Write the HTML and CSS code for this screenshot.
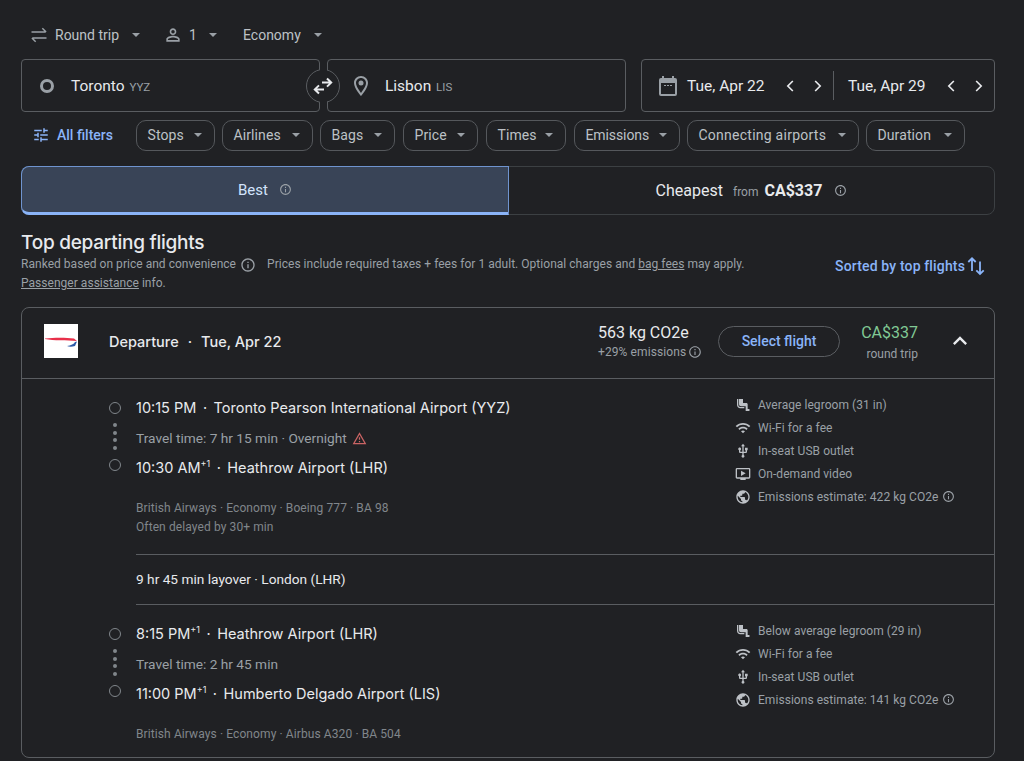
FILE: index.html
```html
<!DOCTYPE html>
<html lang="en">
<head>
<meta charset="utf-8">
<title>Flights</title>
<link rel="stylesheet" href="styles.css">
</head>
<body>
<svg class="defs" width="0" height="0" aria-hidden="true">
  <symbol id="caret" viewBox="0 0 10 5"><path d="M0 0l5 5 5-5z"/></symbol>
  <symbol id="info" viewBox="0 0 24 24"><path d="M11 7h2v2h-2zm0 4h2v6h-2zm1-9C6.48 2 2 6.48 2 12s4.48 10 10 10 10-4.48 10-10S17.52 2 12 2zm0 18c-4.41 0-8-3.59-8-8s3.59-8 8-8 8 3.59 8 8-3.59 8-8 8z"/></symbol>
  <symbol id="seat" viewBox="0 0 24 24"><path d="M5 12V3H3v9c0 2.76 2.24 5 5 5h6v-2H8c-1.66 0-3-1.34-3-3zm15.5 6H19v-7c0-1.1-.9-2-2-2h-5V3H6v8c0 1.65 1.35 3 3 3h7v7h4.5c.83 0 1.5-.67 1.5-1.5s-.67-1.5-1.5-1.5z"/></symbol>
  <symbol id="wifi" viewBox="0 0 24 24"><path d="M1 9l2 2c4.97-4.97 13.03-4.97 18 0l2-2C16.93 2.93 7.08 2.93 1 9zm8 8l3 3 3-3c-1.65-1.66-4.34-1.66-6 0zm-4-4l2 2c2.76-2.76 7.24-2.76 10 0l2-2C15.14 9.14 8.87 9.14 5 13z"/></symbol>
  <symbol id="usb" viewBox="0 0 24 24"><path d="M15 7v4h1v2h-3V5h2l-3-4-3 4h2v8H8v-2.07c.7-.37 1.2-1.08 1.2-1.93 0-1.21-.99-2.2-2.2-2.2-1.21 0-2.2.99-2.2 2.2 0 .85.5 1.56 1.2 1.93V13c0 1.11.89 2 2 2h3v3.05c-.71.37-1.2 1.1-1.2 1.95 0 1.22.99 2.2 2.2 2.2 1.21 0 2.2-.98 2.2-2.2 0-.85-.49-1.58-1.2-1.95V15h3c1.11 0 2-.89 2-2v-2h1V7h-4z"/></symbol>
  <symbol id="video" viewBox="0 0 24 24"><path d="M21 3H3c-1.11 0-2 .89-2 2v12c0 1.1.89 2 2 2h5v2h8v-2h5c1.1 0 2-.9 2-2V5c0-1.11-.9-2-2-2zm0 14H3V5h18v12zM16 11l-7 4V7z"/></symbol>
  <symbol id="globe" viewBox="0 0 24 24"><path d="M12 2C6.48 2 2 6.48 2 12s4.48 10 10 10 10-4.48 10-10S17.52 2 12 2zm-1 17.93c-3.95-.49-7-3.85-7-7.93 0-.62.08-1.21.21-1.79L9 15v1c0 1.1.9 2 2 2v1.93zm6.9-2.54c-.26-.81-1-1.39-1.9-1.39h-1v-3c0-.55-.45-1-1-1H8v-2h2c.55 0 1-.45 1-1V7h2c1.1 0 2-.9 2-2v-.41c2.93 1.19 5 4.06 5 7.41 0 2.08-.8 3.97-2.1 5.39z"/></symbol>
  <symbol id="left" viewBox="0 0 24 24"><path d="M15.4 6L9.4 12l6 6" fill="none" stroke="currentColor" stroke-width="2"/></symbol>
  <symbol id="right" viewBox="0 0 24 24"><path d="M8.6 6l6 6-6 6" fill="none" stroke="currentColor" stroke-width="2"/></symbol>
</svg>

<main class="page">
  <div class="trip-row">
    <div class="trip-item trip-type">
      <svg class="icon-20" viewBox="0 0 24 24"><path d="M3 8.5h17M16 4l4.500 4.500M21 15.500H4M8 20l-4.500-4.500" fill="none" stroke="currentColor" stroke-width="1.800"/></svg>
      <span>Round trip</span><svg class="caret"><use href="#caret"/></svg>
    </div>
    <div class="trip-item trip-pax">
      <svg class="icon-20" viewBox="0 0 24 24"><path d="M12 5.900a2.100 2.100 0 110 4.200 2.100 2.100 0 010-4.200m0 9c2.970 0 6.100 1.460 6.100 2.100v1.100H5.900V17c0-.64 3.130-2.100 6.100-2.100M12 4C9.790 4 8 5.790 8 8s1.790 4 4 4 4-1.790 4-4-1.790-4-4-4zm0 9c-2.670 0-8 1.340-8 4v3h16v-3c0-2.660-5.330-4-8-4z"/></svg>
      <span>1</span><svg class="caret"><use href="#caret"/></svg>
    </div>
    <div class="trip-item trip-class"><span>Economy</span><svg class="caret"><use href="#caret"/></svg></div>
  </div>

  <div class="search-row">
    <div class="place-group">
      <div class="place origin">
        <span class="origin-dot"></span>
        <span class="place-name">Toronto <small>YYZ</small></span>
      </div>
      <div class="place dest">
        <svg class="icon-24" viewBox="0 0 24 24"><path d="M12 2C8.130 2 5 5.130 5 9c0 5.250 7 13 7 13s7-7.750 7-13c0-3.870-3.130-7-7-7zM7 9c0-2.760 2.240-5 5-5s5 2.240 5 5c0 2.880-2.880 7.190-5 9.880C9.920 16.210 7 11.850 7 9z"/><circle cx="12" cy="9" r="2.500"/></svg>
        <span class="place-name">Lisbon <small>LIS</small></span>
      </div>
      <div class="swap">
        <svg viewBox="0 0 24 24"><path d="M11 8.600h9M16 4.500l4.200 4.100-4.200 4M13 15.400H4M8 11.400l-4.200 4 4.200 4.100" fill="none" stroke="#e8eaed" stroke-width="2"/></svg>
      </div>
    </div>
    <div class="dates">
      <svg class="icon-24 cal" viewBox="0 0 24 24"><path d="M19 4h-1V2h-2v2H8V2H6v2H5a2 2 0 00-2 2v14a2 2 0 002 2h14a2 2 0 002-2V6a2 2 0 00-2-2zm0 16H5V9h14v11zM8 11h2v1H8zm3 0h2v1h-2zm3 0h2v1h-2z"/></svg>
      <span class="date-text first">Tue, Apr 22</span>
      <svg class="chev"><use href="#left"/></svg>
      <svg class="chev ch-b"><use href="#right"/></svg>
      <span class="date-sep"></span>
      <span class="date-text second">Tue, Apr 29</span>
      <svg class="chev"><use href="#left"/></svg>
      <svg class="chev ch-b"><use href="#right"/></svg>
    </div>
  </div>

  <div class="filter-row">
    <div class="all-filters">
      <svg class="icon-18" viewBox="0 0 24 24"><path d="M3 17v2h6v-2H3zM3 5v2h10V5H3zm10 16v-2h8v-2h-8v-2h-2v6h2zM7 9v2H3v2h4v2h2V9H7zm14 4v-2H11v2h10zm-6-4h2V7h4V5h-4V3h-2v6z"/></svg>
      <span>All filters</span>
    </div>
    <div class="chip w-stops"><span>Stops</span><svg class="caret"><use href="#caret"/></svg></div>
    <div class="chip w-air"><span>Airlines</span><svg class="caret"><use href="#caret"/></svg></div>
    <div class="chip w-bags"><span>Bags</span><svg class="caret"><use href="#caret"/></svg></div>
    <div class="chip w-price"><span>Price</span><svg class="caret"><use href="#caret"/></svg></div>
    <div class="chip w-times"><span>Times</span><svg class="caret"><use href="#caret"/></svg></div>
    <div class="chip w-emis"><span>Emissions</span><svg class="caret"><use href="#caret"/></svg></div>
    <div class="chip w-conn"><span>Connecting airports</span><svg class="caret"><use href="#caret"/></svg></div>
    <div class="chip w-dur"><span>Duration</span><svg class="caret"><use href="#caret"/></svg></div>
  </div>

  <div class="tabs">
    <div class="tab tab-best"><span>Best</span><svg class="info-12"><use href="#info"/></svg></div>
    <div class="tab tab-cheap">
      <span>Cheapest</span><span class="from">from</span><b>CA$337</b><svg class="info-12"><use href="#info"/></svg>
    </div>
  </div>

  <section class="results-head">
    <div class="results-copy">
      <h1>Top departing flights</h1>
      <p class="note">Ranked based on price and convenience <svg class="info-16"><use href="#info"/></svg><span class="note-gap">Prices include required taxes + fees for 1 adult. Optional charges and <u>bag fees</u> may apply.</span></p>
      <p class="note second-note"><u>Passenger assistance</u> info.</p>
    </div>
    <div class="sorted">
      <span>Sorted by top flights</span>
      <svg viewBox="0 0 20 20"><path d="M6 15V2.500M2.300 6L6 2.300 9.700 6M14 5.500V18M10.300 14.300L14 18l3.700-3.700" fill="none" stroke="currentColor" stroke-width="1.800"/></svg>
    </div>
  </section>

  <article class="card">
    <header class="card-head">
      <svg class="logo" viewBox="0 0 34 34"><rect width="34" height="34" fill="#fff"/><path d="M1 14.500C10 13.500 22 13.500 30 14.500L33 17C22 16 10 17 1 15z" fill="#e8304a"/><path d="M23 22C27 21.500 30 20 31 18L33 17.500 31 22C28 23 25 23 23 22z" fill="#2d5aa8"/></svg>
      <div class="head-title">Departure<span class="dot">·</span>Tue, Apr 22</div>
      <div class="emissions">
        <div class="co2">563 kg CO2e</div>
        <div class="co2-sub">+29% emissions <svg class="info-14"><use href="#info"/></svg></div>
      </div>
      <div class="select-btn">Select flight</div>
      <div class="price">
        <div class="price-val">CA$337</div>
        <div class="price-sub">round trip</div>
      </div>
      <svg class="collapse" viewBox="0 0 24 24"><path d="M12 8l-6 6 1.410 1.410L12 10.830l4.590 4.580L18 14z"/></svg>
    </header>

    <div class="details">
      <div class="leg leg-one">
        <div class="timeline"><span class="stop"></span><span class="dots"><i></i><i></i><i></i><i></i></span><span class="stop"></span></div>
        <div class="itinerary">
          <div class="stop-line">10:15 PM<span class="dot">·</span>Toronto Pearson International Airport (YYZ)</div>
          <div class="travel">Travel time: 7 hr 15 min · Overnight <svg class="warn" viewBox="0 0 24 24"><path d="M12 5.990L19.530 19H4.470L12 5.990M12 2L1 21h22L12 2zm1 14h-2v2h2v-2zm0-6h-2v4h2v-4z"/></svg></div>
          <div class="stop-line">10:30 AM<sup>+1</sup><span class="dot">·</span>Heathrow Airport (LHR)</div>
          <div class="meta">British Airways · Economy · Boeing 777 · BA 98</div>
          <div class="meta">Often delayed by 30+ min</div>
        </div>
        <ul class="amenities">
          <li><svg><use href="#seat"/></svg>Average legroom (31 in)</li>
          <li><svg><use href="#wifi"/></svg>Wi-Fi for a fee</li>
          <li><svg><use href="#usb"/></svg>In-seat USB outlet</li>
          <li><svg><use href="#video"/></svg>On-demand video</li>
          <li><svg><use href="#globe"/></svg>Emissions estimate: 422 kg CO2e <svg class="info-13"><use href="#info"/></svg></li>
        </ul>
      </div>
      <div class="layover">9 hr 45 min layover · London (LHR)</div>
      <div class="leg leg-two">
        <div class="timeline"><span class="stop"></span><span class="dots"><i></i><i></i><i></i><i></i></span><span class="stop"></span></div>
        <div class="itinerary">
          <div class="stop-line">8:15 PM<sup>+1</sup><span class="dot">·</span>Heathrow Airport (LHR)</div>
          <div class="travel">Travel time: 2 hr 45 min</div>
          <div class="stop-line">11:00 PM<sup>+1</sup><span class="dot">·</span>Humberto Delgado Airport (LIS)</div>
          <div class="meta">British Airways · Economy · Airbus A320 · BA 504</div>
        </div>
        <ul class="amenities">
          <li><svg><use href="#seat"/></svg>Below average legroom (29 in)</li>
          <li><svg><use href="#wifi"/></svg>Wi-Fi for a fee</li>
          <li><svg><use href="#usb"/></svg>In-seat USB outlet</li>
          <li><svg><use href="#globe"/></svg>Emissions estimate: 141 kg CO2e <svg class="info-13"><use href="#info"/></svg></li>
        </ul>
      </div>
    </div>
  </article>
</main>
</body>
</html>
```
FILE: styles.css
```css
* { box-sizing: border-box; }
html, body { margin: 0; height: 100%; }
body {
  background: #202124;
  color: #e8eaed;
  font-family: Roboto, "Liberation Sans", sans-serif;
  overflow: hidden;
}
svg { fill: currentColor; flex: none; display: block; }
.defs { position: absolute; }
.page { width: 1024px; height: 761px; padding: 0 29px 0 21px; }

.caret { width: 8px; height: 4px; color: #9aa0a6; }
.icon-20 { width: 20px; height: 20px; }
.icon-24 { width: 24px; height: 24px; }
.icon-18 { width: 18px; height: 18px; }
.info-12 { width: 13px; height: 13px; color: #9aa0a6; }
.info-13 { width: 13px; height: 13px; margin-left: 4px; }
.info-14 { width: 14px; height: 14px; }
.info-16 { width: 16px; height: 16px; }

.trip-row { height: 59px; display: flex; align-items: center; padding: 10px 0 0 8px; font-size: 14px; }
.trip-item { display: flex; align-items: center; color: #bdc1c6; }
.trip-item .icon-20 { color: #9aa0a6; }
.trip-type { gap: 6px; width: 134px; }
.trip-type .caret { margin-left: 7px; }
.trip-pax { gap: 6px; width: 80px; }
.trip-pax .caret { margin-left: 6px; }
.trip-class .caret { margin-left: 13px; }

.search-row { display: flex; height: 53px; gap: 15px; }
.place-group { position: relative; display: flex; gap: 7px; width: 605px; }
.place { flex: none; width: 299px; border: 1px solid #5a5d61; border-radius: 4px; display: flex; align-items: center; }
.origin { padding-left: 18px; gap: 17px; }
.dest { padding-left: 21px; gap: 12px; color: #9aa0a6; }
.origin-dot { width: 14px; height: 14px; border: 3px solid #9aa0a6; border-radius: 50%; }
.place-name { font-size: 15.5px; color: #e8eaed; }
.place-name small { font-size: 11.5px; color: #9aa0a6; margin-left: 1px; }
.swap { position: absolute; left: 285px; top: 10px; width: 34px; height: 34px; border-radius: 50%; background: #202124; border: 1px solid #5a5d61; display: flex; align-items: center; justify-content: center; }
.swap::before { content: ""; position: absolute; left: 13px; top: -2px; width: 7px; height: 36px; background: #202124; }
.swap svg { width: 24px; height: 24px; position: relative; }

.dates { flex: 1; border: 1px solid #5a5d61; border-radius: 4px; display: flex; align-items: center; padding-left: 14px; color: #9aa0a6; }
.date-text { font-size: 15.5px; color: #e8eaed; width: 93px; }
.date-text.first { margin-left: 7px; }
.date-text.second { margin-left: 14.5px; }
.chev { width: 20px; height: 20px; color: #e8eaed; }
.ch-b { margin-left: 7.5px; }
.date-sep { width: 1px; height: 29px; background: #5a5d61; margin-left: 5px; }

.filter-row { display: flex; align-items: center; height: 30px; margin-top: 8px; gap: 7px; }
.all-filters { display: flex; align-items: center; width: 108px; padding-left: 11px; gap: 7px; color: #8ab4f8; font-size: 14px; font-weight: 500; }
.chip { height: 31px; border: 1px solid #55585c; border-radius: 10px; display: flex; align-items: center; justify-content: space-between; padding: 0 12px 0 10.5px; font-size: 14px; color: #bdc1c6; letter-spacing: .1px; }
.w-stops { width: 79px; }
.w-air { width: 91px; }
.w-bags { width: 75px; }
.w-price { width: 75px; margin-left: 1px; }
.w-times { width: 80px; margin-left: 1px; }
.w-emis { width: 106px; margin-left: 1px; letter-spacing: -.1px; }
.w-conn { width: 172px; letter-spacing: .25px; }
.w-dur { width: 99px; }

.tabs { display: flex; height: 49px; margin-top: 16px; border: 1px solid #3c4043; border-radius: 8px; }
.tab { display: flex; align-items: center; justify-content: center; font-size: 15px; }
.tab-best { width: 488px; margin: -1px 0 -1px -1px; background: #394457; border: 1px solid #6f94cf; border-bottom: 3px solid #8ab4f8; border-radius: 8px 0 0 8px; gap: 11px; color: #d2e3fc; }
.tab-cheap { flex: 1; font-size: 16px; color: #e8eaed; }
.tab-cheap .from { font-size: 12px; color: #9aa0a6; margin: 2px 6px 0 10px; }
.tab-cheap b { font-size: 16px; margin-right: 12px; }

.results-head { display: flex; justify-content: space-between; margin-top: 17px; height: 75px; }
h1 { margin: 0; font-size: 19px; font-weight: 500; line-height: 22px; font-family: Inter, Roboto, sans-serif; letter-spacing: -.25px; }
.note { margin: 2px 0 0; font-size: 12px; line-height: 17px; color: #9aa0a6; display: flex; align-items: center; white-space: nowrap; letter-spacing: .03px; }
.note .info-16 { margin-left: 4px; }
.note-gap { margin-left: 11px; }
.second-note { margin-top: 2px; display: block; }
.sorted { display: flex; align-items: center; gap: 1px; height: 20px; margin: 24px 9px 0 0; color: #8ab4f8; font-size: 14px; font-weight: 500; letter-spacing: .15px; }
.sorted svg { width: 20px; height: 20px; }

.card { height: 451px; border: 1px solid #5a5d61; border-radius: 8px; }
.card-head { height: 71px; padding: 0 0 4px 22px; border-bottom: 1px solid #5a5d61; display: flex; align-items: center; }
.logo { width: 34px; height: 34px; }
.head-title { margin-left: 31px; width: 489px; font-family: Inter, Roboto, sans-serif; font-size: 14.5px; font-weight: 500; }
.dot { margin: 0 9px; }
.emissions { width: 120px; padding-top: 1px; }
.co2 { font-size: 16px; line-height: 20px; }
.co2-sub { font-size: 12px; line-height: 18px; color: #9aa0a6; display: flex; align-items: center; gap: 2px; letter-spacing: .1px; }
.select-btn { width: 122px; height: 31px; border: 1px solid #5a5d61; border-radius: 16px; display: flex; align-items: center; justify-content: center; color: #8ab4f8; font-size: 14px; font-weight: 500; }
.price { width: 78px; padding-top: 3px; text-align: right; }
.price-val { color: #81c995; font-size: 16px; line-height: 22px; }
.price-sub { color: #9aa0a6; font-size: 12px; line-height: 20px; }
.collapse { width: 28px; height: 28px; margin-left: 28px; }

.details { padding-left: 86px; }
.leg { display: flex; padding-top: 21px; }
.timeline { width: 28px; padding-top: 2px; display: flex; flex-direction: column; align-items: flex-start; }
.stop { width: 12px; height: 12px; margin-left: 1px; border: 1.5px solid #80868b; border-radius: 50%; }
.dots { display: flex; flex-direction: column; gap: 3.7px; margin: 9px 0 9px 5px; }
.dots i { width: 4px; height: 4px; border-radius: 50%; background: #80868b; }
.leg-one { height: 175px; }
.leg-two { height: 153px; }
.itinerary { width: 599px; }
.stop-line { height: 16px; line-height: 16px; margin-bottom: 14px; font-family: Inter, Roboto, sans-serif; font-size: 14.5px; white-space: nowrap; }
.stop-line sup { font-size: 9px; line-height: 0; }
.stop-line .dot { margin: 0 6.5px; }
.travel { height: 16px; line-height: 16px; margin-bottom: 14px; color: #9aa0a6; font-size: 13.7px; display: flex; align-items: center; gap: 5px; }
.warn { width: 15px; height: 15px; color: #c96464; }
.meta { font-size: 12px; line-height: 19px; color: #80868b; letter-spacing: .1px; }
.itinerary .stop-line + .meta { margin-top: 23px; }
.amenities { list-style: none; margin: -7px 0 0; padding: 0; color: #9aa0a6; font-size: 12px; letter-spacing: .05px; }
.amenities li { height: 23px; display: flex; align-items: center; white-space: nowrap; }
.amenities li > svg:first-child { width: 16px; height: 16px; margin-right: 7px; color: #bdc1c6; }
.layover { margin-left: 28px; height: 51px; padding-bottom: 2px; border-top: 1px solid #5a5d61; border-bottom: 1px solid #5a5d61; display: flex; align-items: center; font-size: 13.7px; }
```
